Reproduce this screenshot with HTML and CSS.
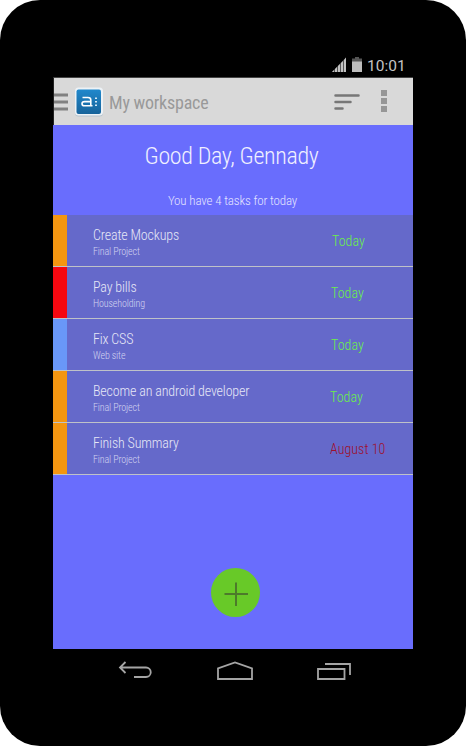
FILE: index.html
```html
<!DOCTYPE html>
<html lang="en">
<head>
<meta charset="utf-8">
<title>My workspace</title>
<link rel="stylesheet" href="styles.css">
</head>
<body>
<div class="phone">
  <div class="status">
    <svg class="signal" width="15" height="15" viewBox="0 0 15 15"><path d="M0 15L14 .5V15Z" fill="#555"/><path d="M0 15L2 13V15ZM3 12L5 10V15H3ZM6 9L8 7V15H6ZM9 6L11 4V15H9ZM12 3L14 .5V15H12Z" fill="#c2c2c2"/></svg>
    <svg class="battery" width="10" height="15" viewBox="0 0 10 15"><path d="M3 0H7V1.500H10V5H0V1.500H3Z" fill="#555"/><path d="M0 4.500H10V15H0Z" fill="#bdbdbd"/></svg>
    <span class="clock">10:01</span>
  </div>
  <main class="screen">
    <header class="bar">
      <svg class="menu" width="14" height="18" viewBox="0 0 14 18"><path d="M0 2H14M0 9H14M0 16H14" stroke="#818181" stroke-width="3"/></svg>
      <svg class="logo" width="30" height="30" viewBox="0 0 30 30">
        <defs><linearGradient id="blue" x1="0" y1="0" x2="0" y2="1"><stop offset="0" stop-color="#2088cc"/><stop offset="1" stop-color="#17639a"/></linearGradient></defs>
        <rect x="1" y="1.500" width="28" height="28" rx="3.500" fill="#b5c3ce"/>
        <rect x="1" y=".5" width="28" height="28" rx="3.500" fill="#edf2f6"/>
        <rect x="2.500" y="2.500" width="24.500" height="24.500" rx="2" fill="url(#blue)"/>
        <path d="M8.500 10.500H14Q16.800 10.500 16.800 13V18.800H10.500Q8 18.800 8 16.700T10.500 14.600H16.800M16.800 18.800H18.500" fill="none" stroke="#fff" stroke-width="1.600"/>
        <path d="M21 10.500H23V12H21ZM21 14H23V15.500H21ZM21 17.500H23V19H21Z" fill="#d5e8f5"/>
      </svg>
      <h1 class="name">My workspace</h1>
      <svg class="sort" width="26" height="18" viewBox="0 0 26 18"><path d="M1.500 2.500H24.500M1.500 9H16.500M1.500 15.500H8.500" stroke="#777" stroke-width="2.500" stroke-linecap="round"/></svg>
      <svg class="more" width="6" height="22" viewBox="0 0 6 22"><path d="M0 0H6V6H0ZM0 8H6V14H0ZM0 16H6V22H0Z" fill="#969696"/></svg>
    </header>
    <section class="hello">
      <h2 class="greet">Good Day, Gennady</h2>
      <p class="count">You have 4 tasks for today</p>
    </section>
    <ul class="tasks">
      <li class="task orange"><div class="info"><b>Create Mockups</b><small>Final Project</small></div><span class="due d1">Today</span></li>
      <li class="task red"><div class="info"><b>Pay bills</b><small>Householding</small></div><span class="due d2">Today</span></li>
      <li class="task blue"><div class="info"><b>Fix CSS</b><small>Web site</small></div><span class="due d2">Today</span></li>
      <li class="task orange"><div class="info"><b>Become an android developer</b><small>Final Project</small></div><span class="due">Today</span></li>
      <li class="task orange"><div class="info"><b>Finish Summary</b><small>Final Project</small></div><span class="due late">August 10</span></li>
    </ul>
    <button class="add" aria-label="Add task"><svg width="49" height="49" viewBox="0 0 49 49"><path d="M13.500 26H37M25 14.500V38" stroke="#4d7a2b" stroke-width="2"/></svg></button>
  </main>
  <nav class="keys">
    <svg width="34" height="18" viewBox="0 0 34 18"><path d="M2 6.500H28A4.700 4.700 0 0 1 28 16H16M7.500 1L2 6.500L7.500 12" fill="none" stroke="#a5a5a5" stroke-width="1.800"/></svg>
    <svg width="36" height="19" viewBox="0 0 36 19"><path d="M1 18V7.500L18 1.500L35 7.500V18Z" fill="none" stroke="#a5a5a5" stroke-width="1.800"/></svg>
    <svg width="34" height="17" viewBox="0 0 34 17"><path d="M1 6H27.500V16H1ZM8 1H33V12" fill="none" stroke="#a5a5a5" stroke-width="1.800"/></svg>
  </nav>
</div>
</body>
</html>
```
FILE: styles.css
```css
* { box-sizing: border-box; margin: 0; padding: 0; }
body { background: #fff; font-family: "Roboto Condensed", Roboto, sans-serif; font-stretch: 75%; font-weight: 300; }
svg { display: block; flex: none; }
.phone { width: 466px; height: 746px; padding: 50px 53px 0; border-radius: 40px; background: #000; }
.status { display: flex; height: 27px; padding: 7px 7px 0 0; justify-content: flex-end; }
.signal { margin-right: 5px; }
.battery { margin-right: 5px; }
.clock { width: 39px; padding-top: 1px; font: 400 15.500px/17px Roboto, sans-serif; color: #c4c4c4; white-space: nowrap; }
.screen { display: flex; flex-direction: column; height: 572px; background: #696dfd; }
.bar { display: flex; align-items: center; height: 48px; padding: 1px 26px 0 0; border-top: 1px solid #444; border-left: 1px solid #222; background: #d9d9d9; }
.logo { margin-left: 6px; }
.name { flex: 1; margin-left: 5px; padding-top: 1px; font-size: 18px; font-weight: 450; letter-spacing: -.22px; color: #999; }
.sort { margin-right: 21px; }
.more { margin-top: -2px; }
.hello { height: 90px; text-align: center; color: #f0f0ff; }
.greet { padding: 16px 3px 0 0; font-size: 24px; line-height: 30px; font-weight: 300; letter-spacing: -.35px; }
.count { padding: 21px 1px 0 0; font-size: 13px; line-height: 17px; letter-spacing: -.14px; color: #e4e4ff; }
.tasks { list-style: none; }
.task { display: flex; height: 52px; border-bottom: 1px solid #bfc2c8; background: linear-gradient(to right, var(--tag) 14px, #6569ca 14px); white-space: nowrap; }
.orange { --tag: #f49611; }
.red { --tag: #f60710; }
.blue { --tag: #6997f8; }
.info { width: 277px; padding: 11px 0 0 40px; color: #e6e7f6; }
.info b, .info small { display: block; width: max-content; }
.info b { font-size: 14px; line-height: 18px; font-weight: 300; letter-spacing: -.16px; }
.info small { font-size: 10px; line-height: 15px; letter-spacing: -.12px; color: #d2d4f0; }
.due { font-size: 14px; line-height: 52px; letter-spacing: .05px; color: #6bef4c; }
.d1 { margin-left: 2px; }
.d2 { margin-left: 1px; }
.late { color: #a00f2c; }
.add { width: 49px; height: 49px; margin: 93px 0 0 158px; border: 0; border-radius: 50%; background: #68c928; }
.keys { display: flex; justify-content: space-between; height: 44px; padding: 12px 62px 0 65px; }
.keys svg:last-child { margin-top: 2px; }
```
